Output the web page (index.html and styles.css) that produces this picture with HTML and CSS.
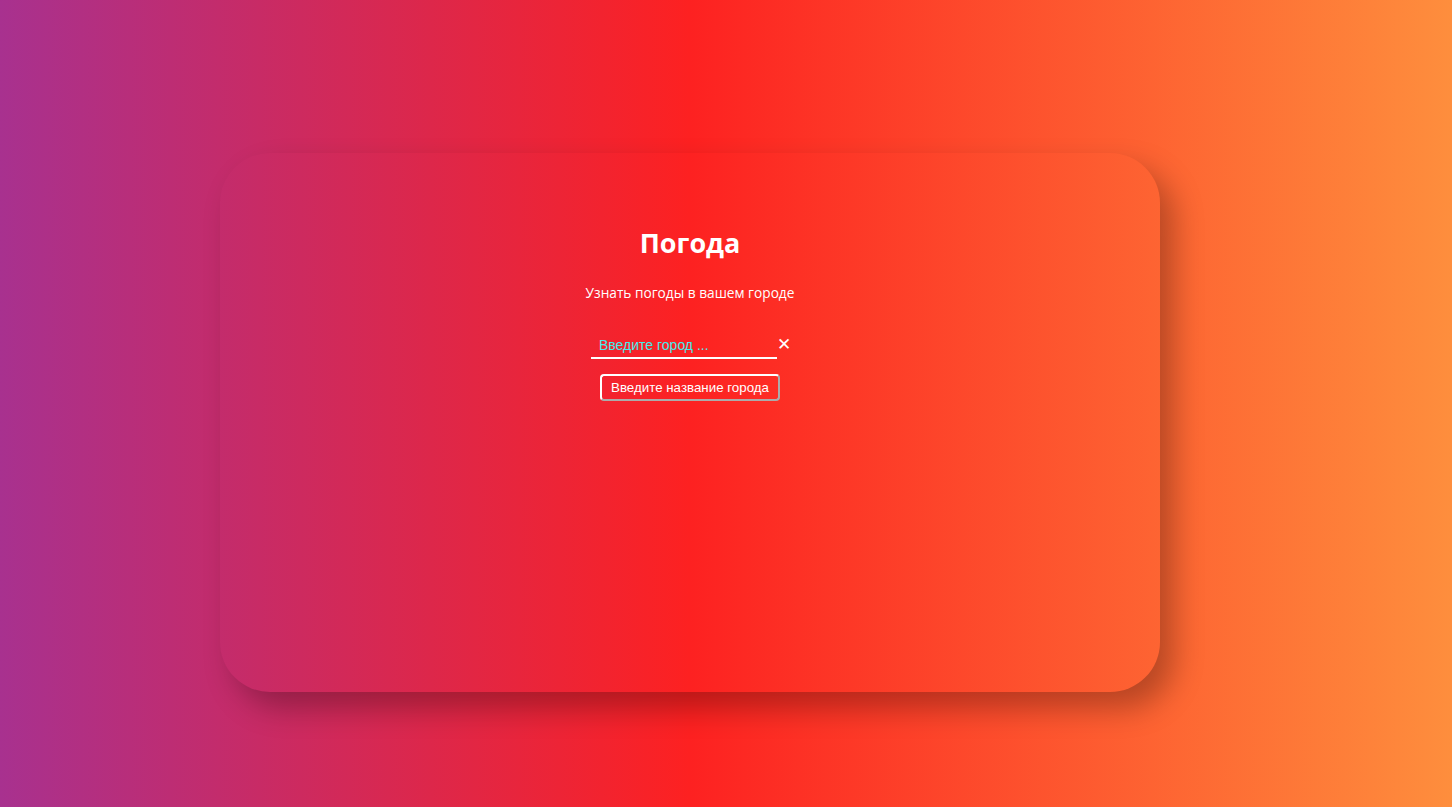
FILE: index.html
```html
<!DOCTYPE html>
<html lang="ru">
<head>
<meta charset="utf-8">
<title>Погода</title>
<link rel="stylesheet" href="styles.css">
</head>
<body>
<main class="card">
  <h1 class="title">Погода</h1>
  <p class="subtitle">Узнать погоды в вашем городе</p>
  <form class="search">
    <div class="field">
      <input class="city" type="text" placeholder="Введите город ...">
      <span class="clear">✕</span>
    </div>
    <button class="submit" type="button">Введите название города</button>
  </form>
</main>
</body>
</html>
```

FILE: styles.css
```css
html, body {
  margin: 0;
  height: 100%;
}
body {
  background: linear-gradient(to right, #a8318f 0%, #fd2121 47.5%, #fe8e3d 100%);
  padding: 153px 0 0 220px;
  box-sizing: border-box;
  font-family: "Open Sans", "Liberation Sans", sans-serif;
  color: #fff;
  overflow: hidden;
}
.card {
  width: 940px;
  height: 539px;
  border-radius: 50px;
  box-shadow: 14px 16px 30px rgba(0, 0, 0, 0.28);
  box-sizing: border-box;
  padding-top: 70px;
  display: flex;
  flex-direction: column;
  align-items: center;
}
.title {
  margin: 0;
  font-size: 27px;
  font-weight: 700;
  line-height: 40px;
}
.subtitle {
  margin: 20px 0 0;
  font-size: 13.7px;
  line-height: 20px;
}
.search {
  margin-top: 30px;
  display: flex;
  flex-direction: column;
  align-items: center;
}
.field {
  display: flex;
  align-items: flex-start;
}
.city {
  width: 186px;
  height: 26px;
  box-sizing: border-box;
  background: transparent;
  border: none;
  border-bottom: 2px solid #fff;
  padding: 0 8px;
  font-family: "Liberation Sans", Arial, sans-serif;
  font-size: 14px;
  color: #fff;
  outline: none;
}
.city::placeholder {
  color: #44ecec;
}
.clear {
  width: 12px;
  margin-top: 2px;
  font-family: "DejaVu Sans", sans-serif;
  font-weight: 700;
  font-size: 17px;
  line-height: 18px;
}
.submit {
  margin-top: 15px;
  height: 27px;
  padding: 0 9px;
  background: transparent;
  border: 2px outset #fff;
  border-radius: 4px;
  color: #fff;
  font-family: "Liberation Sans", Arial, sans-serif;
  font-size: 13.33px;
}
```
